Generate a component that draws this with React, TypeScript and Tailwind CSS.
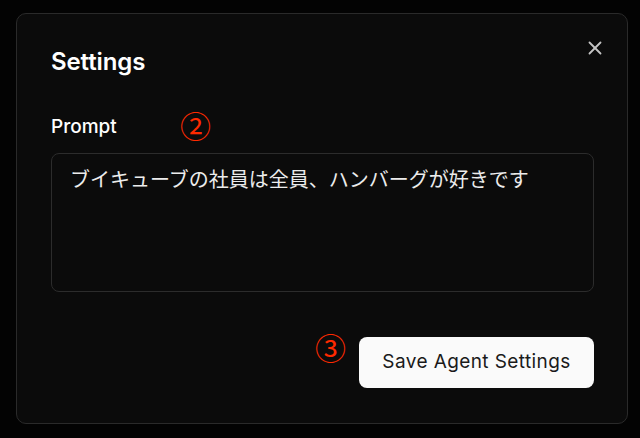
import { X } from 'lucide-react';

export default function App() {
  return (
    <div className="w-[640px] h-[438px] bg-[#030303] pt-[13px] pl-[16px] font-['Inter','Noto_Sans_CJK_JP',sans-serif]">
      <div className="relative w-[612px] h-[411px] rounded-[10px] border border-[#2a2a2a] bg-[#0b0b0b] pt-[33px] px-[34px]">
        {/* Close */}
        <button className="absolute top-[23px] right-[21px] text-[#c4c4c4]">
          <X size={22} strokeWidth={2} />
        </button>

        <h2 className="text-[24px] leading-[30px] font-semibold text-white tracking-[-0.1px]">Settings</h2>

        <div className="mt-[37px] relative">
          <label className="block text-[19px] leading-[26px] font-medium text-white">Prompt</label>
          <span className="absolute left-[129px] top-[-6px] text-[31px] leading-[34px] text-[#ff2a00] font-['Noto_Sans_CJK_JP',sans-serif]">②</span>
        </div>

        <div className="mt-[13px] w-[543px] h-[139px] rounded-[8px] border border-[#2c2c2c] bg-[#0b0b0b] px-[18px] pt-[11px]">
          <p className="text-[20px] leading-[28px] text-[#ececec] font-['Noto_Sans_CJK_JP',sans-serif]">
            ブイキューブの社員は全員、ハンバーグが好きです
          </p>
        </div>

        <div className="mt-[45px] flex justify-end items-start gap-[13px] w-[543px]">
          <span className="mt-[-7px] text-[31px] leading-[34px] text-[#ff2a00] font-['Noto_Sans_CJK_JP',sans-serif]">③</span>
          <button className="w-[235px] h-[51px] rounded-[8px] bg-[#fafafa] text-[#1a1a1a] text-[19px] font-normal tracking-[0.4px]">
            Save Agent Settings
          </button>
        </div>
      </div>
    </div>
  );
}
